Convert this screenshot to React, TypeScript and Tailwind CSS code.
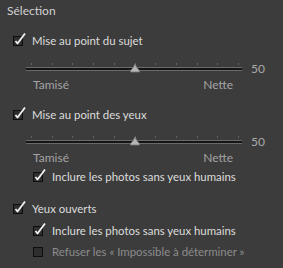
import React from "react";

type CheckProps = {
  label: string;
  checked?: boolean;
  disabled?: boolean;
  indent?: boolean;
  className?: string;
};

function Check({ label, checked = true, disabled = false, indent = false, className = "" }: CheckProps) {
  return (
    <div className={`flex h-[20px] items-center ${indent ? "pl-[33px]" : "pl-[13px]"} ${className}`}>
      <span className="relative h-[10px] w-[10px] shrink-0 border border-[#0e0e0e] bg-[#2e2e2e]">
        {checked && (
          <svg className="absolute -left-[1px] -top-[5px] overflow-visible" width="14" height="14" viewBox="0 0 14 14">
            <path d="M2.5 9 L4.5 11.5 L12 1.5" fill="none" stroke="#f2f2f2" strokeWidth="1.8" strokeLinejoin="round" />
          </svg>
        )}
      </span>
      <span className={`ml-[9px] ${disabled ? "text-[#8c8c8c]" : "text-[#dcdcdc]"}`}>{label}</span>
    </div>
  );
}

function Slider({ className = "" }: { className?: string }) {
  const ticks = Array.from({ length: 11 }, (_, i) => i);
  return (
    <div className={className}>
      <div className="flex h-[19px] items-center">
        <div className="relative ml-[25px] h-[19px] w-[218px]">
          {ticks.map((i) => (
            <span
              key={i}
              className="absolute top-[4px] h-[2px] w-px bg-[#626262]"
              style={{ left: 6 + i * 20.7 }}
            />
          ))}
          <div className="absolute left-0 right-0 top-[8px] h-[4px] rounded-[2px] border-y border-[#6a6a6a] bg-[#141414]" />
          <svg className="absolute left-[104px] top-[5px]" width="12" height="9" viewBox="0 0 12 9">
            <path d="M6 0 L8 4 Q11 6 10.5 8 L1.5 8 Q1 6 4 4 Z" fill="#b4b4b4" stroke="#7c7c7c" strokeWidth="0.8" />
          </svg>
        </div>
        <span className="ml-[8px] text-[12px] text-[#a9a9a9]">50</span>
      </div>
      <div className="flex h-[14px] items-center justify-between pl-[33px] pr-[50px] text-[12px] text-[#a4a4a4]">
        <span>Tamisé</span>
        <span>Nette</span>
      </div>
    </div>
  );
}

export default function App() {
  return (
    <div className="h-[268px] w-[283px] overflow-hidden bg-[#3c3c3c] text-[11.4px] font-['Lato',sans-serif]">
      <div className="h-[22px] pl-[7px] text-[12px] leading-[22px] text-[#d2d2d2]">Sélection</div>
      <Check label="Mise au point du sujet" className="mt-[9px]" />
      <Slider className="mt-[8px]" />
      <Check label="Mise au point des yeux" className="mt-[13px]" />
      <Slider className="mt-[7px]" />
      <Check label="Inclure les photos sans yeux humains" indent className="mt-[2px]" />
      <Check label="Yeux ouverts" className="mt-[12px]" />
      <Check label="Inclure les photos sans yeux humains" indent className="mt-[2px]" />
      <Check label="Refuser les « Impossible à déterminer »" indent checked={false} disabled className="mt-[1px]" />
    </div>
  );
}
